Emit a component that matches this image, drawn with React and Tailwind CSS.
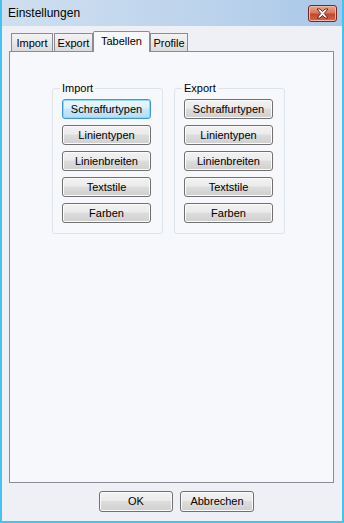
import React from "react";

function Btn({ children, focus = false, w = "w-[89px]", h = "h-[20px]" }) {
  const base =
    "flex items-center justify-center rounded-[3px] border text-[11px] leading-none text-black " +
    w +
    " " +
    h;
  const normal =
    " border-[#707070] bg-[linear-gradient(#f2f2f2,#ebebeb_45%,#dddddd_50%,#cfcfcf)] shadow-[inset_0_0_0_1px_#fbfbfb]";
  const focused =
    " border-[#3c9ad8] bg-[linear-gradient(#ebf7fd,#dcf1fc_45%,#c4e8fc_50%,#b3dff7)] shadow-[inset_0_0_0_1px_#8fd7f7]";
  return <div className={base + (focus ? focused : normal)}>{children}</div>;
}

function Group({ title, focusFirst }) {
  return (
    <fieldset className="w-[111px] rounded-[3px] border border-[#dde3ea] px-[9px] pb-[10px]">
      <legend className="-ml-[2px] px-[2px] text-[11px] leading-[13px] text-black">{title}</legend>
      <div className="mt-[4px] flex flex-col gap-[6px]">
        <Btn focus={focusFirst}>Schraffurtypen</Btn>
        <Btn>Linientypen</Btn>
        <Btn>Linienbreiten</Btn>
        <Btn>Textstile</Btn>
        <Btn>Farben</Btn>
      </div>
    </fieldset>
  );
}

function Tab({ label, active = false, w }) {
  if (active) {
    return (
      <div
        className={
          "relative z-10 -mb-px flex h-[21px] items-start justify-center rounded-t-[2px] border border-b-0 border-[#898c95] bg-[#f7f8fc] pt-[3px] text-[11px] leading-[13px] text-black " +
          w
        }
      >
        {label}
      </div>
    );
  }
  return (
    <div
      className={
        "flex h-[18px] items-start justify-center border border-b-0 border-[#898c95] bg-[linear-gradient(#f3f3f3,#e9e9e9_50%,#dadada)] pt-[3px] text-[11px] leading-[13px] text-black " +
        w
      }
    >
      {label}
    </div>
  );
}

export default function App() {
  return (
    <div className="flex h-[523px] w-[344px] flex-col border-x-2 border-b-2 border-[#43c3ef] bg-[#eef0f6] font-['Liberation_Sans',Arial,sans-serif]">
      {/* title bar */}
      <div className="flex h-[26px] shrink-0 items-center justify-between bg-[linear-gradient(90deg,#cfdff0,#bcd3ec_60%,#a9c7e8)] pl-[6px] pr-[5px]">
        <span className="text-[12px] leading-none text-black">Einstellungen</span>
        <div className="flex h-[17px] w-[29px] items-center justify-center rounded-[3px] border border-[#6b2a24] bg-[linear-gradient(#e8a692,#d9785f_45%,#c8452c_55%,#d2664a)] shadow-[inset_0_0_0_1px_#f0b9a8]">
          <svg width="13" height="11" viewBox="0 0 13 11">
            <path
              d="M1 1 L4 1 L6.5 3.6 L9 1 L12 1 L8.2 5.5 L12 10 L9 10 L6.5 7.4 L4 10 L1 10 L4.8 5.5 Z"
              fill="#ffffff"
              stroke="#5a1e18"
              strokeWidth="0.9"
              strokeLinejoin="round"
            />
          </svg>
        </div>
      </div>

      {/* body */}
      <div className="flex flex-1 flex-col pl-[7px] pr-[8px]">
        <div className="mt-[5px] flex h-[20px] items-end pl-[2px]">
          <Tab label="Import" w="w-[42px]" />
          <div className="w-[1px]" />
          <Tab label="Export" w="w-[39px]" />
          <Tab label="Tabellen" active w="w-[57px]" />
          <Tab label="Profile" w="w-[38px]" />
        </div>
        <div className="h-[432px] border border-[#898c95] bg-[#f7f8fc]">
          <div className="flex gap-[11px] pl-[42px] pt-[30px]">
            <Group title="Import" focusFirst />
            <Group title="Export" />
          </div>
        </div>
        <div className="mt-[8px] flex gap-[7px] pl-[90px]">
          <Btn w="w-[74px]" h="h-[21px]">OK</Btn>
          <Btn w="w-[74px]" h="h-[21px]">Abbrechen</Btn>
        </div>
      </div>
    </div>
  );
}
